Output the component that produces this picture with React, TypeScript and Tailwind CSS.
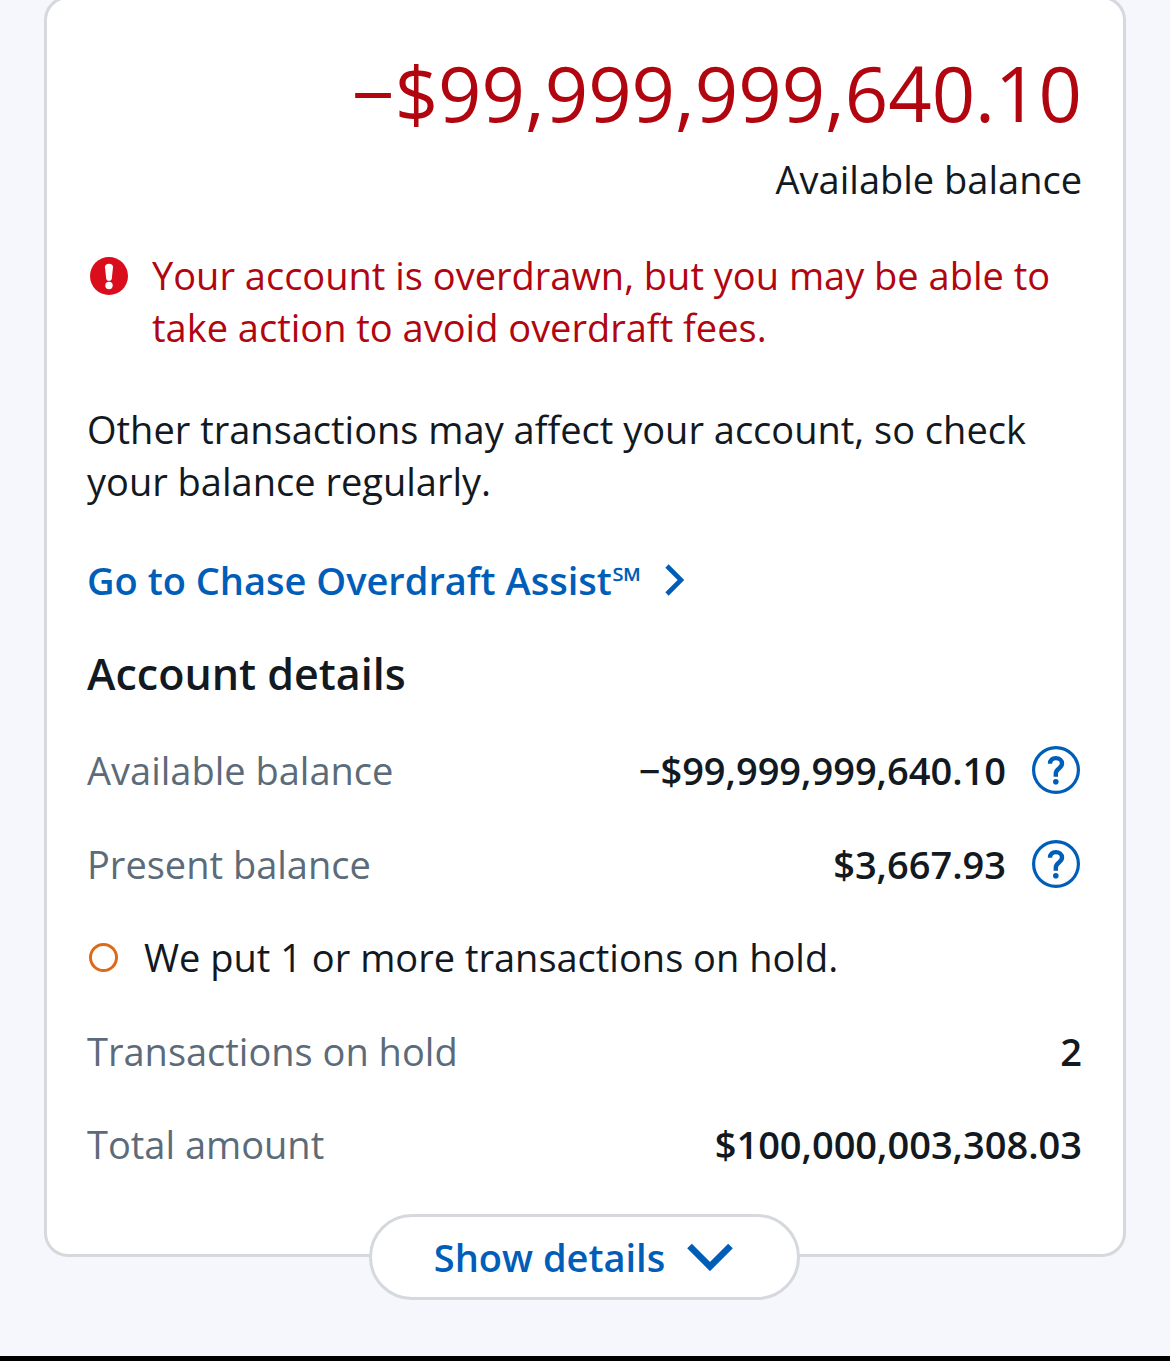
import type { ReactNode } from "react";

function AlertIcon() {
  return (
    <svg viewBox="0 0 38 38" className="mt-2 ml-[3px] size-[38px] shrink-0" aria-hidden="true">
      <circle cx="19" cy="19" r="19" fill="#d90d1c" />
      <path
        d="M15 10.200C14.800 8 16.500 6.800 19 6.800s4.200 1.200 4 3.400l-1.200 11.300c-.2 1.500-1.200 2.300-2.800 2.300s-2.600-.8-2.800-2.300Z"
        fill="#fff"
      />
      <circle cx="19" cy="28.500" r="3.700" fill="#fff" />
    </svg>
  );
}

function HelpButton({ label }: { label: string }) {
  return (
    <button type="button" aria-label={label} className="mr-0.5 ml-[26px] shrink-0 text-[#005eb8]">
      <svg viewBox="0 0 48 48" className="size-12" fill="none" stroke="currentColor" aria-hidden="true">
        <circle cx="24" cy="24" r="22.400" strokeWidth="3.200" />
        <path d="M18 17.800c0-3.600 2.300-5.700 5.800-5.700s6.200 2.200 6.200 5.500c0 5-6.200 4.700-6.200 9.900v3.300" strokeWidth="4.400" />
        <circle cx="23.800" cy="35.800" r="2.800" fill="currentColor" stroke="none" />
      </svg>
    </button>
  );
}

function Row({ label, value, help }: { label: string; value: string; help?: ReactNode }) {
  return (
    <div className="flex h-[52px] items-center">
      <dt className="text-[#5c6b7a]">{label}</dt>
      <dd className="ml-auto flex items-center font-semibold">
        {value}
        {help}
      </dd>
    </div>
  );
}

export default function App() {
  return (
    <div className="flow-root min-h-screen overflow-hidden border-b-[5px] border-black bg-[#f5f7fc] px-11 pb-12 font-['Open_Sans',sans-serif] text-[38px] leading-[52px] text-[#121921]">
      <main className="-mt-1 mb-11 rounded-3xl border-[3px] border-[#d5d8dc] bg-white pt-[42px] pr-[41px] pl-10">
        <section className="text-right">
          <p className="text-[76px] leading-[104px] text-[#b1060f]">−$99,999,999,640.10</p>
          <p className="mt-2">Available balance</p>
        </section>

        <div className="mt-11 flex gap-6 text-[#b1060f]">
          <AlertIcon />
          <p>Your account is overdrawn, but you may be able to take action to avoid overdraft fees.</p>
        </div>
        <p className="mt-[50px]">Other transactions may affect your account, so check your balance regularly.</p>
        <a href="#overdraft-assist" className="mt-[47px] flex items-center font-semibold text-[#005eb8]">
          Go to Chase Overdraft Assist℠
          <svg viewBox="0 0 20 32" className="ml-[22px] h-8 w-5" fill="none" stroke="currentColor" strokeWidth="4.600" aria-hidden="true">
            <path d="m3 2 14 14L3 30" />
          </svg>
        </a>

        <h2 className="mt-10 text-[43px] leading-[56px] font-semibold">Account details</h2>
        <dl className="mt-[42px] flex flex-col gap-[42px]">
          <Row label="Available balance" value="−$99,999,999,640.10" help={<HelpButton label="About available balance" />} />
          <Row label="Present balance" value="$3,667.93" help={<HelpButton label="About present balance" />} />
        </dl>
        <p className="mt-[41px] mb-[42px] flex items-center gap-6">
          <span className="mx-0.5 size-[29px] shrink-0 rounded-full border-[3px] border-[#dc6a1a]" />
          We put 1 or more transactions on hold.
        </p>
        <dl className="flex flex-col gap-[41px]">
          <Row label="Transactions on hold" value="2" />
          <Row label="Total amount" value="$100,000,003,308.03" />
        </dl>
        <button
          type="button"
          className="mx-auto mt-11 -mb-[46px] flex h-[86px] items-center rounded-full border-[3px] border-[#d5d8dc] bg-white pr-16 pl-[62px] font-semibold text-[#005eb8]"
        >
          Show details
          <svg viewBox="0 0 46 28" className="ml-[22px] h-7 w-[46px]" fill="none" stroke="currentColor" strokeWidth="6.600" aria-hidden="true">
            <path d="m2.500 3 20.500 20.500L43.500 3" />
          </svg>
        </button>
      </main>
    </div>
  );
}
